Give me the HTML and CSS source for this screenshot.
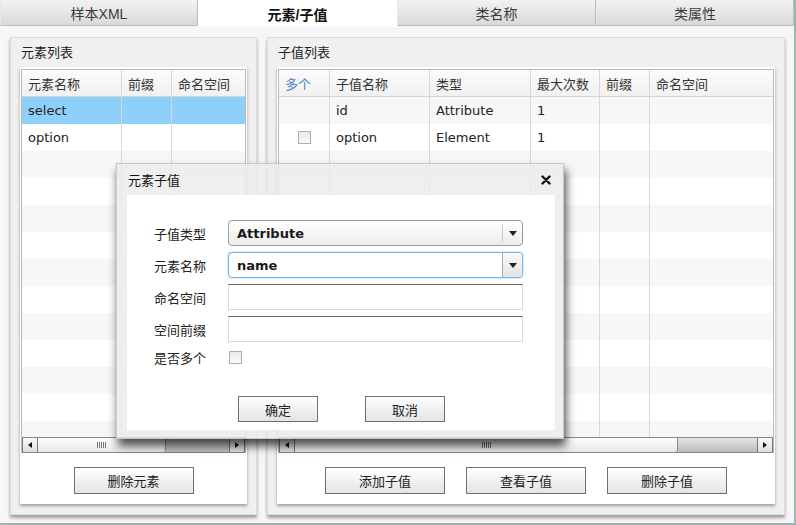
FILE: index.html
```html
<!DOCTYPE html>
<html lang="zh">
<head>
<meta charset="utf-8">
<title>元素/子值</title>
<link rel="stylesheet" href="styles.css">
</head>
<body>
<div class="app">
  <div class="tabs">
    <div class="tab">样本XML</div>
    <div class="tab active">元素/子值</div>
    <div class="tab">类名称</div>
    <div class="tab">类属性</div>
  </div>
  <div class="content">
    <section class="panel panel-left">
      <div class="panel-title">元素列表</div>
      <div class="panel-box">
        <div class="grid">
          <div class="grid-head">
            <div class="cell w100">元素名称</div>
            <div class="cell w50">前缀</div>
            <div class="cell w75 last">命名空间</div>
          </div>
          <div class="grid-body">
            <div class="row selected"><div class="cell w100">select</div><div class="cell w50"></div><div class="cell w75 last"></div></div>
            <div class="row"><div class="cell w100">option</div><div class="cell w50"></div><div class="cell w75 last"></div></div>
            <div class="row"><div class="cell w100"></div><div class="cell w50"></div><div class="cell w75 last"></div></div>
            <div class="row"><div class="cell w100"></div><div class="cell w50"></div><div class="cell w75 last"></div></div>
            <div class="row"><div class="cell w100"></div><div class="cell w50"></div><div class="cell w75 last"></div></div>
            <div class="row"><div class="cell w100"></div><div class="cell w50"></div><div class="cell w75 last"></div></div>
            <div class="row"><div class="cell w100"></div><div class="cell w50"></div><div class="cell w75 last"></div></div>
            <div class="row"><div class="cell w100"></div><div class="cell w50"></div><div class="cell w75 last"></div></div>
            <div class="row"><div class="cell w100"></div><div class="cell w50"></div><div class="cell w75 last"></div></div>
            <div class="row"><div class="cell w100"></div><div class="cell w50"></div><div class="cell w75 last"></div></div>
            <div class="row"><div class="cell w100"></div><div class="cell w50"></div><div class="cell w75 last"></div></div>
            <div class="row"><div class="cell w100"></div><div class="cell w50"></div><div class="cell w75 last"></div></div>
            <div class="row"><div class="cell w100"></div><div class="cell w50"></div><div class="cell w75 last"></div></div>
          </div>
          <div class="hscroll">
            <div class="sb-btn sb-left"><span class="tri-l"></span></div>
            <div class="sb-track">
              <div class="sb-thumb thumb-left"><span class="grip"></span></div>
            </div>
            <div class="sb-btn sb-right"><span class="tri-r"></span></div>
          </div>
        </div>
        <div class="btn-bar">
          <button class="btn">删除元素</button>
        </div>
      </div>
    </section>

    <section class="panel panel-right">
      <div class="panel-title">子值列表</div>
      <div class="panel-box">
        <div class="grid">
          <div class="grid-head">
            <div class="cell c-multi head-multi">多个</div>
            <div class="cell c-name">子值名称</div>
            <div class="cell c-type">类型</div>
            <div class="cell c-max">最大次数</div>
            <div class="cell c-pre">前缀</div>
            <div class="cell c-ns last">命名空间</div>
          </div>
          <div class="grid-body">
            <div class="row"><div class="cell c-multi"></div><div class="cell c-name">id</div><div class="cell c-type">Attribute</div><div class="cell c-max">1</div><div class="cell c-pre"></div><div class="cell c-ns last"></div></div>
            <div class="row"><div class="cell c-multi center"><span class="checkbox"></span></div><div class="cell c-name">option</div><div class="cell c-type">Element</div><div class="cell c-max">1</div><div class="cell c-pre"></div><div class="cell c-ns last"></div></div>
            <div class="row"><div class="cell c-multi"></div><div class="cell c-name"></div><div class="cell c-type"></div><div class="cell c-max"></div><div class="cell c-pre"></div><div class="cell c-ns last"></div></div>
            <div class="row"><div class="cell c-multi"></div><div class="cell c-name"></div><div class="cell c-type"></div><div class="cell c-max"></div><div class="cell c-pre"></div><div class="cell c-ns last"></div></div>
            <div class="row"><div class="cell c-multi"></div><div class="cell c-name"></div><div class="cell c-type"></div><div class="cell c-max"></div><div class="cell c-pre"></div><div class="cell c-ns last"></div></div>
            <div class="row"><div class="cell c-multi"></div><div class="cell c-name"></div><div class="cell c-type"></div><div class="cell c-max"></div><div class="cell c-pre"></div><div class="cell c-ns last"></div></div>
            <div class="row"><div class="cell c-multi"></div><div class="cell c-name"></div><div class="cell c-type"></div><div class="cell c-max"></div><div class="cell c-pre"></div><div class="cell c-ns last"></div></div>
            <div class="row"><div class="cell c-multi"></div><div class="cell c-name"></div><div class="cell c-type"></div><div class="cell c-max"></div><div class="cell c-pre"></div><div class="cell c-ns last"></div></div>
            <div class="row"><div class="cell c-multi"></div><div class="cell c-name"></div><div class="cell c-type"></div><div class="cell c-max"></div><div class="cell c-pre"></div><div class="cell c-ns last"></div></div>
            <div class="row"><div class="cell c-multi"></div><div class="cell c-name"></div><div class="cell c-type"></div><div class="cell c-max"></div><div class="cell c-pre"></div><div class="cell c-ns last"></div></div>
            <div class="row"><div class="cell c-multi"></div><div class="cell c-name"></div><div class="cell c-type"></div><div class="cell c-max"></div><div class="cell c-pre"></div><div class="cell c-ns last"></div></div>
            <div class="row"><div class="cell c-multi"></div><div class="cell c-name"></div><div class="cell c-type"></div><div class="cell c-max"></div><div class="cell c-pre"></div><div class="cell c-ns last"></div></div>
            <div class="row"><div class="cell c-multi"></div><div class="cell c-name"></div><div class="cell c-type"></div><div class="cell c-max"></div><div class="cell c-pre"></div><div class="cell c-ns last"></div></div>
          </div>
          <div class="hscroll">
            <div class="sb-btn sb-left"><span class="tri-l"></span></div>
            <div class="sb-track">
              <div class="sb-thumb thumb-right"><span class="grip"></span></div>
            </div>
            <div class="sb-btn sb-right"><span class="tri-r"></span></div>
          </div>
        </div>
        <div class="btn-bar">
          <button class="btn">添加子值</button>
          <button class="btn">查看子值</button>
          <button class="btn">删除子值</button>
        </div>
      </div>
    </section>
  </div>

  <div class="dialog">
    <div class="dialog-title">
      <span>元素子值</span>
      <svg class="close" width="10" height="10" viewBox="0 0 10 10" aria-label="关闭">
        <path d="M1.5 1.5 L8.5 8.5 M8.5 1.5 L1.5 8.5" stroke="#111" stroke-width="2.4" stroke-linecap="round" fill="none"/>
      </svg>
    </div>
    <div class="dialog-body">
      <div class="form">
        <label class="f-label">子值类型</label>
        <div class="combo">
          <span class="combo-text">Attribute</span>
          <span class="combo-arrow"><span class="tri-d"></span></span>
        </div>
        <label class="f-label">元素名称</label>
        <div class="combo focused">
          <span class="combo-text">name</span>
          <span class="combo-arrow"><span class="tri-d"></span></span>
        </div>
        <label class="f-label">命名空间</label>
        <div class="text-input"></div>
        <label class="f-label">空间前缀</label>
        <div class="text-input"></div>
        <label class="f-label">是否多个</label>
        <div class="check-wrap"><span class="checkbox"></span></div>
      </div>
      <div class="dialog-buttons">
        <button class="btn btn-dlg">确定</button>
        <button class="btn btn-dlg">取消</button>
      </div>
    </div>
  </div>
</div>
</body>
</html>
```

FILE: styles.css
```css
* { box-sizing: border-box; }

html, body {
  margin: 0;
  padding: 0;
}

body {
  width: 796px;
  height: 525px;
  overflow: hidden;
  font-family: "DejaVu Sans", "Noto Sans CJK SC", sans-serif;
  font-size: 13px;
  color: #222;
  background: #fff;
}

.app {
  position: relative;
  width: 796px;
  height: 525px;
  background: #f6f6f6;
  border-right: 2px solid #9fb3b3;
  border-bottom: 2px solid #9fb3b3;
}

/* ---------- tabs ---------- */
.tabs {
  display: grid;
  grid-template-columns: 198px 199px 199px 198px;
  height: 27px;
}

.tab {
  display: flex;
  align-items: center;
  justify-content: center;
  height: 26px;
  font-family: "Liberation Sans", "Noto Sans CJK SC", sans-serif;
  font-size: 14px;
  color: #3a3a3a;
  background: linear-gradient(#f2f2f2, #d9d9d9);
  border: 1px solid #bdbdbd;
  border-left-color: #e8e8e8;
  border-top: none;
}

.tab.active {
  height: 27px;
  background: #fff;
  border: none;
  font-weight: bold;
  color: #111;
}

/* ---------- content ---------- */
.content {
  display: flex;
  gap: 10px;
  padding: 10px 0 0 10px;
}

.panel {
  display: flex;
  flex-direction: column;
  height: 478px;
  background: #f0f0f0;
  border: 1px solid #dcdcdc;
  box-shadow: 0 3px 3px rgba(0, 0, 0, 0.35);
  padding: 0 9px 10px 9px;
}

.panel-left { width: 247px; }
.panel-right { width: 518px; }

.panel-title {
  height: 29px;
  line-height: 30px;
  font-size: 13px;
  color: #222;
  padding-left: 1px;
}

.panel-box {
  flex: 1;
  display: flex;
  flex-direction: column;
  background: #fff;
  box-shadow: 0 2px 3px rgba(0, 0, 0, 0.35);
  padding: 2px 1px 0 1px;
}

/* ---------- grid ---------- */
.grid {
  border: 1px solid #b9b9b9;
  border-bottom: none;
  display: flex;
  flex-direction: column;
  height: 384px;
  overflow: hidden;
}

.grid-head {
  display: flex;
  height: 27px;
  flex: none;
  background: linear-gradient(#fbfbfb, #f1f1f1);
  border-bottom: 1px solid #d4d4d4;
}

.grid-body {
  flex: 1;
  overflow: hidden;
}

.row {
  display: flex;
  height: 27px;
}

.row:nth-child(odd) { background: #f7f7f7; }
.row:nth-child(even) { background: #fff; }
.row.selected { background: #8fd0fb; }

.cell {
  flex: none;
  height: 100%;
  display: flex;
  align-items: center;
  padding-left: 6px;
  border-right: 1px solid #d8d8d8;
  white-space: nowrap;
  overflow: hidden;
}

.grid-head .cell { color: #333; }

.cell.last { border-right: none; flex: 1; }
.cell.center { justify-content: center; padding-left: 0; }

.w100 { width: 100px; }
.w50 { width: 50px; }
.w75 { width: 75px; }

.c-multi { width: 51px; }
.c-name { width: 100px; }
.c-type { width: 101px; }
.c-max { width: 69px; }
.c-pre { width: 50px; }
.c-ns { width: 127px; }

.head-multi { color: #4a7fd0 !important; }

.checkbox {
  display: inline-block;
  width: 13px;
  height: 13px;
  border: 1px solid #aeaeae;
  background: linear-gradient(#e8e8e8, #fafafa);
}

/* ---------- scrollbar ---------- */
.hscroll {
  display: flex;
  height: 16px;
  flex: none;
  border-top: 1px solid #888;
  border-bottom: 1px solid #888;
  background: linear-gradient(#e6e6e6, #bcbcbc);
}

.sb-btn {
  flex: none;
  width: 16px;
  display: flex;
  align-items: center;
  justify-content: center;
  background: linear-gradient(#fafafa, #dedede);
  border-left: 1px solid #777;
  border-right: 1px solid #777;
}

.tri-l, .tri-r, .tri-d {
  width: 0;
  height: 0;
  border-style: solid;
}
.tri-l { border-width: 3px 4px 3px 0; border-color: transparent #111 transparent transparent; }
.tri-r { border-width: 3px 0 3px 4px; border-color: transparent transparent transparent #111; }
.tri-d { border-width: 5px 4px 0 4px; border-color: #222 transparent transparent transparent; }

.sb-track {
  flex: 1;
  display: flex;
}

.sb-thumb {
  display: flex;
  align-items: center;
  justify-content: center;
  background: linear-gradient(#ffffff, #e8e8e8);
  border-right: 1px solid #888;
  border-radius: 0 0 3px 0;
}

.thumb-left { width: 128px; }
.thumb-right { width: 383px; }

.grip {
  width: 9px;
  height: 6px;
  background: repeating-linear-gradient(90deg, #777 0 1px, transparent 1px 2px);
}

/* ---------- buttons ---------- */
.btn-bar {
  flex: 1;
  display: flex;
  justify-content: center;
  align-items: flex-start;
  padding-top: 14px;
  gap: 21px;
}

.btn {
  width: 120px;
  height: 27px;
  font-family: "DejaVu Sans", "Noto Sans CJK SC", sans-serif;
  font-size: 13px;
  color: #222;
  background: linear-gradient(#ffffff, #e4e4e4);
  border: 1px solid #6f6f6f;
  border-radius: 0;
  padding: 0;
}

/* ---------- dialog ---------- */
.dialog {
  position: absolute;
  left: 116px;
  top: 163px;
  width: 448px;
  height: 276px;
  background: rgba(236, 236, 236, 0.82);
  border: 1px solid rgba(190, 190, 190, 0.8);
  box-shadow: 2px 7px 9px rgba(0, 0, 0, 0.7);
  padding: 0 8px 8px 10px;
  display: flex;
  flex-direction: column;
}

.dialog-title {
  height: 31px;
  display: flex;
  align-items: center;
  justify-content: space-between;
  padding: 0 4px 0 1px;
  font-size: 13px;
  color: #111;
}

.close {
  display: block;
}

.dialog-body {
  flex: 1;
  background: #fff;
  display: flex;
  flex-direction: column;
  padding: 25px 0 0 27px;
}

.form {
  display: grid;
  grid-template-columns: 74px 295px;
  grid-template-rows: 26px 26px 26px 26px 18px;
  row-gap: 6px;
  align-items: center;
}

.f-label {
  font-size: 13px;
  color: #222;
}

.combo {
  height: 26px;
  display: flex;
  align-items: stretch;
  border: 1px solid #9c9c9c;
  border-radius: 4px;
  background: linear-gradient(#ffffff, #ececec);
}

.combo.focused {
  background: #fff;
  border-color: #72b6e6;
  box-shadow: 0 0 2px rgba(90, 170, 230, 0.7);
}

.combo-text {
  flex: 1;
  display: flex;
  align-items: center;
  padding-left: 8px;
  font-weight: bold;
  color: #1a1a1a;
}

.combo-arrow {
  width: 20px;
  display: flex;
  align-items: center;
  justify-content: center;
  border-left: 1px solid #c8c8c8;
  margin: 3px 0;
}

.combo.focused .combo-arrow {
  margin: 0;
  background: linear-gradient(#fafafa, #e4e4e4);
  border-left: 1px solid #aaa;
  border-radius: 0 3px 3px 0;
}

.text-input {
  height: 26px;
  background: #fff;
  border: 1px solid #dadada;
  border-top: 1px solid #666;
}

.check-wrap {
  display: flex;
  align-items: center;
  padding-left: 1px;
}

.dialog-buttons {
  display: flex;
  gap: 47px;
  padding: 30px 0 0 84px;
}

.btn-dlg {
  width: 80px;
  height: 26px;
}
```
